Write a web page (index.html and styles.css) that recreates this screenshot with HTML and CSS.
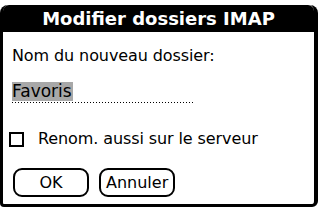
FILE: index.html
```html
<!DOCTYPE html>
<html lang="fr">
<head>
    <meta charset="UTF-8">
    <title>Modifier dossiers IMAP</title>
    <link rel="stylesheet" href="styles.css">
</head>
<body>

    <div class="dialog">
        <div class="title">Modifier dossiers IMAP</div>

        <div class="content">
            <div class="label">Nom du nouveau dossier:</div>

            <div class="field">
                <span class="selected">Favoris</span>
            </div>

            <label class="check-row">
                <span class="checkbox"></span>
                <span>Renom. aussi sur le serveur</span>
            </label>

            <div class="buttons">
                <button class="ok-btn">OK</button>
                <button>Annuler</button>
            </div>
        </div>
    </div>

</body>
</html>
```

FILE: styles.css
```css
body {
    margin: 0;
    padding: 0;
    background-color: #fff;
    font-family: "DejaVu Sans", sans-serif;
    color: #000;
}
.dialog {
    margin-top: 5px;
    width: 311px;
    height: 199px;
    border-left: 3px solid #000;
    border-right: 4px solid #000;
    border-bottom: 3px solid #000;
    border-radius: 8px 8px 6px 4px;
    display: flex;
    flex-direction: column;
}
.title {
    height: 27px;
    background-color: #000;
    color: #fff;
    font-weight: bold;
    font-size: 18px;
    line-height: 28px;
    text-align: center;
    border-radius: 6px 6px 0 0;
}
.content {
    padding: 14px 0 0 9px;
    font-size: 16px;
}
.label {
    line-height: 20px;
    letter-spacing: -0.1px;
}
.field {
    margin-top: 16px;
    width: 181px;
    height: 21px;
    background-image: linear-gradient(to right, #000 50%, transparent 50%);
    background-size: 3px 1px;
    background-repeat: repeat-x;
    background-position: 0 bottom;
}
.selected {
    display: inline-block;
    background-color: #a8a8a8;
    font-size: 17px;
    line-height: 19px;
    padding-right: 1px;
}
.check-row {
    display: flex;
    align-items: center;
    gap: 14px;
    margin-top: 26px;
    line-height: 20px;
    letter-spacing: -0.1px;
}
.checkbox {
    margin-left: -3px;
    width: 11px;
    height: 11px;
    border: 2px solid #000;
}
.buttons {
    display: flex;
    gap: 10px;
    margin-top: 19px;
    padding-left: 1px;
}
.buttons button {
    font-family: "DejaVu Sans", sans-serif;
    font-size: 16px;
    height: 29px;
    padding: 0 5px;
    background-color: #fff;
    color: #000;
    border: 2px solid #000;
    border-radius: 9px;
}
.buttons .ok-btn {
    width: 76px;
}
```
